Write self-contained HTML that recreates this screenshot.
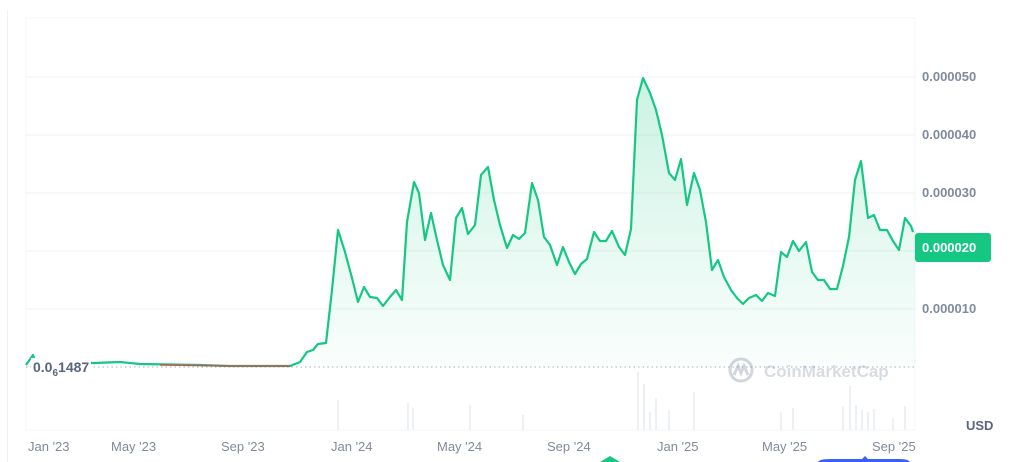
<!DOCTYPE html>
<html><head><style>
body{margin:0;width:1012px;height:462px;background:#fff;overflow:hidden;font-family:"Liberation Sans",sans-serif;position:relative}
.yl{position:absolute;left:922px;font-size:13px;font-weight:bold;color:#808a9d}
.xl{position:absolute;top:439px;font-size:13px;color:#808a9d}
</style></head><body>
<div style="position:absolute;left:7px;top:10px;width:1px;height:452px;background:#eef2f6"></div>
<svg width="1012" height="462" style="position:absolute;left:0;top:0">
<defs><linearGradient id="g" x1="0" y1="0" x2="0" y2="1"><stop offset="0" stop-color="#16c784" stop-opacity="0.22"/><stop offset="1" stop-color="#16c784" stop-opacity="0.02"/></linearGradient></defs>
<rect x="26" y="18" width="889" height="412" fill="none" stroke="#f3f5f8"/>
<g stroke="#eff2f5" stroke-width="1">
<line x1="26" y1="77" x2="915" y2="77"/><line x1="26" y1="135" x2="915" y2="135"/><line x1="26" y1="193" x2="915" y2="193"/><line x1="26" y1="251" x2="915" y2="251"/><line x1="26" y1="309" x2="915" y2="309"/>
</g>
<g stroke="#eef1f4" stroke-width="2">
<line x1="338" y1="430" x2="338" y2="400"/><line x1="408" y1="430" x2="408" y2="403"/><line x1="413" y1="430" x2="413" y2="408"/><line x1="470" y1="430" x2="470" y2="405"/><line x1="523" y1="430" x2="523" y2="415"/><line x1="638" y1="430" x2="638" y2="372"/><line x1="644" y1="430" x2="644" y2="384"/><line x1="650" y1="430" x2="650" y2="412"/><line x1="656" y1="430" x2="656" y2="398"/><line x1="669" y1="430" x2="669" y2="410"/><line x1="694" y1="430" x2="694" y2="392"/><line x1="781" y1="430" x2="781" y2="412"/><line x1="793" y1="430" x2="793" y2="408"/><line x1="843" y1="430" x2="843" y2="406"/><line x1="850" y1="430" x2="850" y2="386"/><line x1="856" y1="430" x2="856" y2="405"/><line x1="862" y1="430" x2="862" y2="410"/><line x1="868" y1="430" x2="868" y2="412"/><line x1="874" y1="430" x2="874" y2="409"/><line x1="893" y1="430" x2="893" y2="418"/><line x1="905" y1="430" x2="905" y2="406"/>
</g>
<line x1="26" y1="367" x2="915" y2="367" stroke="#a6b0c3" stroke-dasharray="1.5 3"/>
<path id="p" d="M26,365 L33,355 L36,363 L95,363 L120,362 L140,364 L200,365 L230,366 L290,366 L300,362 L307,352 L313,350 L318,344 L326,343 L332,290 L338,230 L345,252 L352,278 L358,302 L364,287 L370,297 L377,298 L383,306 L390,297 L396,290 L402,300 L407,222 L414,182 L419,193 L425,240 L431,213 L437,240 L443,265 L450,280 L456,218 L462,208 L468,234 L475,225 L481,175 L488,167 L494,200 L500,225 L507,248 L513,235 L519,239 L525,233 L532,183 L538,200 L544,237 L550,245 L557,265 L563,247 L569,262 L575,274 L581,264 L587,259 L594,232 L600,241 L606,241 L612,231 L619,247 L625,255 L631,229 L637,100 L643,78 L650,93 L656,110 L662,135 L669,173 L675,180 L681,159 L687,205 L694,173 L700,190 L706,222 L712,270 L718,260 L724,277 L731,290 L737,298 L743,304 L749,298 L756,295 L762,301 L768,293 L775,296 L781,252 L787,257 L793,241 L799,251 L806,242 L812,272 L818,280 L824,280 L830,289 L837,289 L843,266 L849,237 L855,180 L861,161 L868,218 L874,215 L880,230 L887,230 L893,241 L899,250 L905,218 L911,226 L913,232" fill="none"/>
<path d="M26,365 L33,355 L36,363 L95,363 L120,362 L140,364 L200,365 L230,366 L290,366 L300,362 L307,352 L313,350 L318,344 L326,343 L332,290 L338,230 L345,252 L352,278 L358,302 L364,287 L370,297 L377,298 L383,306 L390,297 L396,290 L402,300 L407,222 L414,182 L419,193 L425,240 L431,213 L437,240 L443,265 L450,280 L456,218 L462,208 L468,234 L475,225 L481,175 L488,167 L494,200 L500,225 L507,248 L513,235 L519,239 L525,233 L532,183 L538,200 L544,237 L550,245 L557,265 L563,247 L569,262 L575,274 L581,264 L587,259 L594,232 L600,241 L606,241 L612,231 L619,247 L625,255 L631,229 L637,100 L643,78 L650,93 L656,110 L662,135 L669,173 L675,180 L681,159 L687,205 L694,173 L700,190 L706,222 L712,270 L718,260 L724,277 L731,290 L737,298 L743,304 L749,298 L756,295 L762,301 L768,293 L775,296 L781,252 L787,257 L793,241 L799,251 L806,242 L812,272 L818,280 L824,280 L830,289 L837,289 L843,266 L849,237 L855,180 L861,161 L868,218 L874,215 L880,230 L887,230 L893,241 L899,250 L905,218 L911,226 L915,232 L915,367 L26,367 Z" fill="url(#g)"/>
<use href="#p" stroke="#16c784" stroke-width="2.2" stroke-linejoin="round"/>
<path d="M160,365 L230,366 L290,366" fill="none" stroke="#ea3943" stroke-width="1.5" opacity="0.8"/>
<g opacity="0.35" fill="none" stroke="#808a9d" stroke-width="3">
<circle cx="741" cy="370" r="11"/><path d="M734,375 L738,366 L741,373 L744,366 L748,375"/>
</g>
<text x="764" y="377" font-family="Liberation Sans" font-size="17" font-weight="bold" fill="#808a9d" opacity="0.3">CoinMarketCap</text>
<path d="M600,462 L610,456 L620,462 Z" fill="#16c784"/>
<path d="M818,462 Q820,459 830,459 L862,459 L865,456 L868,459 L900,459 Q908,459 910,462 Z" fill="#3861fb"/>
</svg>
<div style="position:absolute;left:31px;top:358px;padding:0 2px;background:#fff;font-size:14px;font-weight:bold;color:#58667e;line-height:18px">0.0<span style="font-size:10px;position:relative;top:4px">6</span>1487</div>
<div class="yl" style="top:69px">0.000050</div>
<div class="yl" style="top:127px">0.000040</div>
<div class="yl" style="top:185px">0.000030</div>
<div class="yl" style="top:301px">0.000010</div>
<div style="position:absolute;left:915px;top:233px;width:76px;height:29px;background:#16c784;border-radius:3px;color:#fff;font-size:13px;font-weight:bold;line-height:29px;text-indent:7px">0.000020</div>
<div style="position:absolute;left:966px;top:418px;font-size:13px;font-weight:bold;color:#58667e">USD</div>
<div class="xl" style="left:28px">Jan '23</div>
<div class="xl" style="left:111px">May '23</div>
<div class="xl" style="left:221px">Sep '23</div>
<div class="xl" style="left:331px">Jan '24</div>
<div class="xl" style="left:437px">May '24</div>
<div class="xl" style="left:547px">Sep '24</div>
<div class="xl" style="left:657px">Jan '25</div>
<div class="xl" style="left:762px">May '25</div>
<div class="xl" style="left:872px">Sep '25</div>
</body></html>
